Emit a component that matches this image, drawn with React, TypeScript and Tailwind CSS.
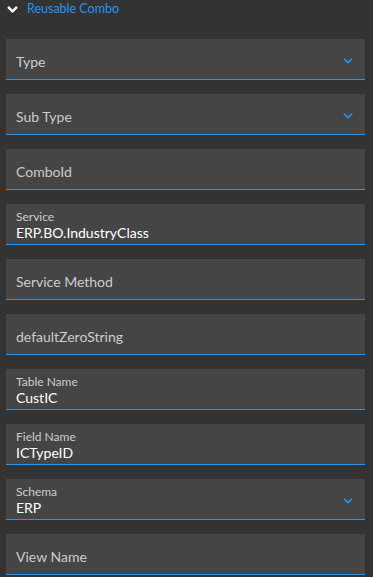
import { ChevronDown } from "lucide-react";

type Field = {
  label: string;
  value?: string;
  select?: boolean;
};

const fields: Field[] = [
  { label: "Type", select: true },
  { label: "Sub Type", select: true },
  { label: "ComboId" },
  { label: "Service", value: "ERP.BO.IndustryClass" },
  { label: "Service Method" },
  { label: "defaultZeroString" },
  { label: "Table Name", value: "CustIC" },
  { label: "Field Name", value: "ICTypeID" },
  { label: "Schema", value: "ERP", select: true },
  { label: "View Name" },
];

function FieldBox({ label, value, select }: Field) {
  return (
    <div className="relative h-[41px] bg-[#454545] border-b border-[#2196f3] px-[10px]">
      {value ? (
        <div className="pt-[5px]">
          <div className="text-[12px] leading-[15px] text-[#cccccc]">{label}</div>
          <div className="text-[14px] leading-[18px] text-white">{value}</div>
        </div>
      ) : (
        <div className="pt-[14px] text-[14px] leading-[18px] text-[#cccccc]">{label}</div>
      )}
      {select && (
        <ChevronDown
          size={14}
          strokeWidth={3}
          className="absolute right-[10px] top-[15px] text-[#2196f3]"
        />
      )}
    </div>
  );
}

export default function App() {
  return (
    <main
      className="min-h-screen w-[373px] bg-[#333333] overflow-hidden"
      style={{ fontFamily: '"Source Sans Pro", Lato, sans-serif' }}
    >
      <div className="flex items-center gap-[7px] pl-[5px] h-[18px]">
        <ChevronDown size={15} strokeWidth={4} className="text-white" />
        <span className="text-[12.5px] text-[#2196f3]">Reusable Combo</span>
      </div>

      <div className="flex flex-col gap-[14px] pl-[6px] pr-[8px] mt-[21px]">
        {fields.map((f) => (
          <FieldBox key={f.label} {...f} />
        ))}
      </div>
    </main>
  );
}
